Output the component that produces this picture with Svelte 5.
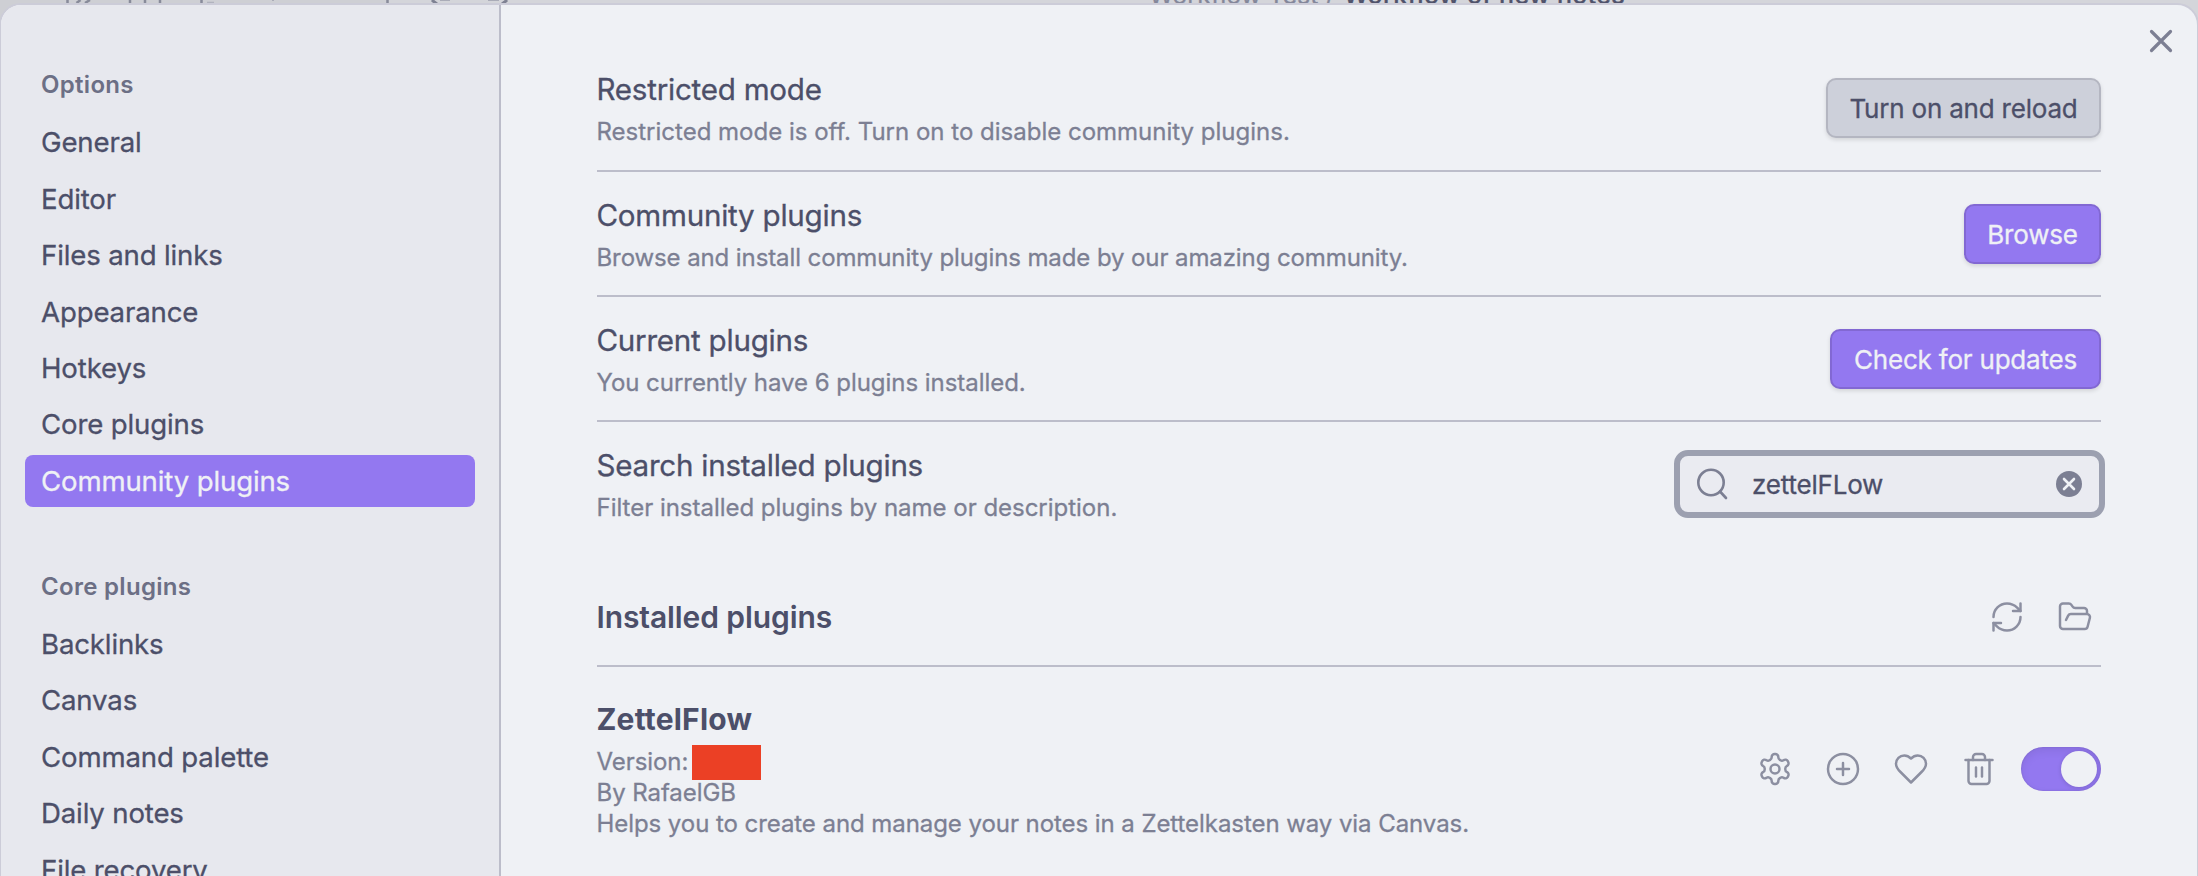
<script>
  const groups = [
    {
      title: 'Options',
      items: ['General', 'Editor', 'Files and links', 'Appearance', 'Hotkeys', 'Core plugins', 'Community plugins']
    },
    {
      title: 'Core plugins',
      items: ['Backlinks', 'Canvas', 'Command palette', 'Daily notes', 'File recovery']
    }
  ];
  const settings = [
    { name: 'Restricted mode', desc: 'Restricted mode is off. Turn on to disable community plugins.', button: 'Turn on and reload', width: 275, spacing: 0 },
    { name: 'Community plugins', desc: 'Browse and install community plugins made by our amazing community.', button: 'Browse', width: 137, cta: true, spacing: -0.1 },
    { name: 'Current plugins', desc: 'You currently have 6 plugins installed.', button: 'Check for updates', width: 271, cta: true, spacing: -0.04 }
  ];
  const icons = {
    refresh: ['M3 12a9 9 0 0 1 9-9 9.75 9.75 0 0 1 6.74 2.74L21 8', 'M21 3v5h-5', 'M21 12a9 9 0 0 1-9 9 9.75 9.75 0 0 1-6.74-2.74L3 16', 'M8 16H3v5'],
    folder: ['m6 14 1.45-2.9A2 2 0 0 1 9.24 10H20a2 2 0 0 1 1.94 2.5l-1.55 6a2 2 0 0 1-1.94 1.5H4a2 2 0 0 1-2-2V5c0-1.1.9-2 2-2h3.93a2 2 0 0 1 1.66.9l.82 1.2a2 2 0 0 0 1.66.9H18a2 2 0 0 1 2 2v2'],
    gear: ['M12.22 2h-.44a2 2 0 0 0-2 2v.18a2 2 0 0 1-1 1.73l-.43.25a2 2 0 0 1-2 0l-.15-.08a2 2 0 0 0-2.73.73l-.22.38a2 2 0 0 0 .73 2.73l.15.1a2 2 0 0 1 1 1.72v.51a2 2 0 0 1-1 1.74l-.15.09a2 2 0 0 0-.73 2.73l.22.38a2 2 0 0 0 2.73.73l.15-.08a2 2 0 0 1 2 0l.43.25a2 2 0 0 1 1 1.73V20a2 2 0 0 0 2 2h.44a2 2 0 0 0 2-2v-.18a2 2 0 0 1 1-1.73l.43-.25a2 2 0 0 1 2 0l.15.08a2 2 0 0 0 2.73-.73l.22-.39a2 2 0 0 0-.73-2.73l-.15-.08a2 2 0 0 1-1-1.74v-.5a2 2 0 0 1 1-1.74l.15-.09a2 2 0 0 0 .73-2.73l-.22-.38a2 2 0 0 0-2.73-.73l-.15.08a2 2 0 0 1-2 0l-.43-.25a2 2 0 0 1-1-1.73V4a2 2 0 0 0-2-2z', 'M15 12a3 3 0 1 1-6 0 3 3 0 0 1 6 0z'],
    plus: ['M22 12a10 10 0 1 1-20 0 10 10 0 0 1 20 0z', 'M12 8v8', 'M8 12h8'],
    heart: ['M19 14c1.49-1.46 3-3.21 3-5.5A5.5 5.5 0 0 0 16.5 3c-1.76 0-3 .5-4.5 2-1.5-1.5-2.74-2-4.5-2A5.5 5.5 0 0 0 2 8.5c0 2.3 1.5 4.05 3 5.5l7 7Z'],
    trash: ['M3 6h18', 'M19 6v14c0 1-1 2-2 2H7c-1 0-2-1-2-2V6', 'M8 6V4c0-1 1-2 2-2h4c1 0 2 1 2 2v2', 'M10 11v6', 'M14 11v6']
  };
  let active = $state('Community plugins');
  let query = $state('zettelFLow');
  let enabled = $state(true);
</script>

{#snippet icon(name)}
  <svg class="icon" viewBox="0 0 24 24" aria-hidden="true">
    {#each icons[name] as d}<path {d} />{/each}
  </svg>
{/snippet}

<div class="window">
  <div class="backdrop">
    <svg class="tabs" width="560" height="3" viewBox="0 0 560 3" aria-hidden="true">
      <path d="M67.5 0v3M80.500 0l-4 3M90 0l-5 3M130 0v3M145 0v3M160 0v3M201.500 0v3M387.500 0v3" stroke="#888b9a" stroke-width="2.500" />
      <path d="M207 2.300h7M272 .5h2M440 .5h10M488 .5h11" stroke="#aaacb8" />
      <path d="M432 0q2 2 5 4M507 0q-2 2-5 4" stroke="#7f8293" stroke-width="3" fill="none" />
    </svg>
    <div class="crumb"><span>Workflow Test / </span><span class="current">Workflow of new notes</span></div>
  </div>

  <div class="modal">
    <nav class="sidebar">
      {#each groups as group}
        <section class="group">
          <h2>{group.title}</h2>
          {#each group.items as item}
            <button class="nav-item" class:active={item === active} onclick={() => (active = item)}>{item}</button>
          {/each}
        </section>
      {/each}
    </nav>

    <main class="content">
      {#each settings as s}
        <div class="setting">
          <div class="info">
            <div class="name">{s.name}</div>
            <div class="desc" style="letter-spacing:{s.spacing}px">{s.desc}</div>
          </div>
          <button class="btn" class:cta={s.cta} style="width:{s.width}px">{s.button}</button>
        </div>
      {/each}
      <div class="setting search-row">
        <div class="info">
          <div class="name">Search installed plugins</div>
          <div class="desc filter">Filter installed plugins by name or description.</div>
        </div>
        <div class="search">
          <svg class="lens" width="32" height="34" viewBox="0 0 32 34" aria-hidden="true">
            <circle cx="15" cy="15.500" r="12.700" /><path d="m24 24.500 6 6.500" />
          </svg>
          <input type="text" bind:value={query} spellcheck="false" aria-label="Search" />
          <svg class="clear" width="26" height="26" viewBox="0 0 26 26" aria-hidden="true">
            <circle cx="13" cy="13" r="13" /><path d="m8 8 10 10M18 8 8 18" />
          </svg>
        </div>
      </div>

      <div class="heading">
        <div class="name">Installed plugins</div>
        <div class="actions">{@render icon('refresh')}{@render icon('folder')}</div>
      </div>

      <div class="plugin">
        <div class="info">
          <div class="name">ZettelFlow</div>
          <div class="desc version"><span>Version:</span><span class="redacted"></span></div>
          <div class="desc">By RafaelGB</div>
          <div class="desc">Helps you to create and manage your notes in a Zettelkasten way via Canvas.</div>
        </div>
        <div class="controls">
          <div class="actions">{@render icon('gear')}{@render icon('plus')}{@render icon('heart')}{@render icon('trash')}</div>
          <button class="toggle" class:on={enabled} aria-label="Toggle plugin" onclick={() => (enabled = !enabled)}><span></span></button>
        </div>
      </div>
    </main>

    <svg class="close" width="24" height="24" viewBox="0 0 24 24" aria-hidden="true"><path d="m2.500 2.500 19 19M21.500 2.500l-19 19" /></svg>
  </div>
</div>

<style>
  :global(body) { margin: 0; overflow: hidden; }
  .window, .window * { box-sizing: border-box; }
  .window {
    position: relative;
    width: 2198px;
    height: 876px;
    overflow: hidden;
    background: #d4d5da;
    color: #4c4f69;
    font-family: Inter, sans-serif;
    -webkit-text-stroke: 0.3px currentColor;
  }
  button { font: inherit; color: inherit; border: 0; margin: 0; }
  .backdrop {
    position: absolute;
    inset: 0 0 auto 0;
    height: 30px;
    background: linear-gradient(90deg, #cecfd4 388px, #d4d5da 388px);
  }
  .tabs { position: absolute; left: 0; top: 0; }
  .crumb {
    position: absolute;
    left: 1149px;
    top: -20px;
    font-size: 25px;
    line-height: 30px;
    white-space: pre;
    color: #84879a;
  }
  .current { color: #50536b; font-weight: 500; letter-spacing: 0.3px; margin-left: 9px; }
  .modal {
    position: absolute;
    left: -1px;
    top: 3px;
    width: 2200px;
    height: 900px;
    display: flex;
    border: 2px solid #ccccd8;
    border-radius: 22px;
    overflow: hidden;
    background: #eff1f5;
  }
  .sidebar {
    flex: none;
    width: 500px;
    padding: 62px 24px 0;
    border-right: 2px solid #bcbdca;
    background: #e7e8ee;
  }
  .group + .group { margin-top: 61.500px; }
  h2 {
    margin: 0 0 13.300px;
    padding-left: 16px;
    font-size: 24px;
    font-weight: 600;
    line-height: 36px;
    letter-spacing: 0.3px;
    color: #6c6f85;
    -webkit-text-stroke: 0;
  }
  .nav-item {
    display: block;
    width: 450px;
    height: 52.400px;
    margin-bottom: 4px;
    padding: 0 16px;
    border-radius: 8px;
    background: none;
    text-align: left;
    font-size: 27.600px;
    line-height: 52px;
    letter-spacing: -0.15px;
  }
  .nav-item.active { background: #9378f0; color: #eff1f5; }
  .content { flex: none; width: 1504px; margin-left: 96px; padding-top: 65px; }
  .setting { display: flex; align-items: center; justify-content: space-between; height: 125px; padding: 24px 0 22px; border-bottom: 2px solid #bcbdca; }
  .setting:first-child { height: 102px; padding: 0 0 23px; }
  .search-row { border: 0; height: 101px; padding-bottom: 0; }
  .info { margin-left: -0.500px; }
  .name { font-size: 29.600px; line-height: 39px; letter-spacing: -0.25px; }
  .desc { font-size: 24px; line-height: 32px; letter-spacing: -0.065px; color: #7c7f93; }
  .desc.filter { letter-spacing: -0.02px; }
  .setting .desc { margin-bottom: -1px; }
  .setting .name { margin-bottom: 7px; }
  .btn {
    height: 60px;
    margin-bottom: 2px;
    padding: 0;
    border: 2px solid #b4b6c1;
    border-radius: 10px;
    background: #cdd0da;
    box-shadow: 0 2px 4px rgba(0, 0, 0, 0.12);
    font-size: 26px;
    letter-spacing: -0.2px;
    line-height: 57px;
    white-space: nowrap;
  }
  .btn.cta { background: #9378f0; border-color: #8268d3; color: #eff1f5; }
  .search {
    display: flex;
    align-items: center;
    width: 431px;
    height: 68px;
    margin: 0 -4px 2px 0;
    padding: 0 17px 0 16px;
    border: 6px solid #9ca0b0;
    border-radius: 14px;
    background: #eaebf1;
  }
  .lens { flex: none; fill: none; stroke: #7c7f93; stroke-width: 2.600; stroke-linecap: round; }
  input {
    flex: 1;
    min-width: 0;
    height: 48px;
    margin: 2px 0 0 24px;
    padding: 0;
    border: 0;
    outline: 0;
    background: none;
    color: inherit;
    font: 26px Inter, sans-serif;
    letter-spacing: -0.2px;
  }
  .clear { flex: none; fill: #7c7f93; stroke: #eff1f5; stroke-width: 2.600; stroke-linecap: round; }
  .clear circle { stroke: none; }
  .heading {
    display: flex;
    align-items: center;
    justify-content: space-between;
    height: 80px;
    margin-top: 64px;
    padding-bottom: 18px;
    border-bottom: 2px solid #bcbdca;
  }
  .heading .name { margin-left: -0.500px; font-size: 30px; font-weight: 600; letter-spacing: -0.1px; -webkit-text-stroke: 0; }
  .heading .actions { margin-right: 8px; }
  .actions { display: flex; gap: 32px; }
  .icon { width: 36px; height: 36px; fill: none; stroke: #8c8fa1; stroke-width: 1.650; stroke-linecap: round; stroke-linejoin: round; }
  .plugin { display: flex; align-items: center; justify-content: space-between; padding-top: 33px; }
  .plugin .name { margin-bottom: 7px; font-size: 30px; font-weight: 700; letter-spacing: 0.2px; -webkit-text-stroke: 0; }
  .plugin .desc { line-height: 31px; }
  .version { display: flex; align-items: center; height: 31px; }
  .redacted { flex: none; width: 69px; height: 35px; margin: 1px 0 0 3.500px; background: #eb4025; }
  .controls { display: flex; align-items: center; gap: 24px; margin-bottom: 2px; }
  .toggle {
    width: 80px;
    height: 44px;
    padding: 4px;
    border-radius: 22px;
    background: #bcc0cc;
    display: flex;
    box-shadow: inset 0 4px 10px rgba(0, 0, 0, 0.07), inset 0 0 2px rgba(0, 0, 0, 0.15);
  }
  .toggle.on { justify-content: flex-end; background: #9378f0; }
  .toggle span { width: 36px; height: 36px; border-radius: 50%; background: #eff1f5; box-shadow: 0 1px 4px rgba(0, 0, 0, 0.15); }
  .close { position: absolute; left: 2147.500px; top: 24px; fill: none; stroke: #7c7f93; stroke-width: 3.200; stroke-linecap: round; }
</style>
